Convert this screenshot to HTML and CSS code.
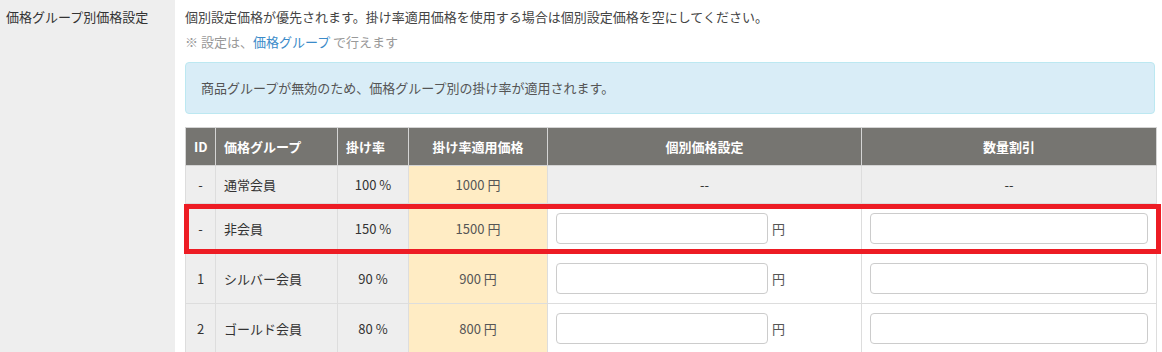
FILE: index.html
```html
<!DOCTYPE html>
<html lang="ja">
<head>
    <meta charset="UTF-8">
    <meta name="viewport" content="width=device-width, initial-scale=1.0">
    <title>価格グループ別価格設定</title>
    <link rel="stylesheet" href="styles.css">
</head>
<body>
    <div class="form-row">
        <div class="form-label">価格グループ別価格設定</div>
        <div class="form-body">
            <p class="note">個別設定価格が優先されます。掛け率適用価格を使用する場合は個別設定価格を空にしてください。</p>
            <p class="hint">※ 設定は、<a href="#">価格グループ</a> で行えます</p>
            <div class="alert-info">商品グループが無効のため、価格グループ別の掛け率が適用されます。</div>
            <div class="table-wrap">
                <table class="price-table">
                    <colgroup>
                        <col class="col-id">
                        <col class="col-group">
                        <col class="col-rate">
                        <col class="col-price">
                        <col class="col-custom">
                        <col class="col-qty">
                    </colgroup>
                    <thead>
                        <tr>
                            <th class="center">ID</th>
                            <th>価格グループ</th>
                            <th>掛け率</th>
                            <th class="center">掛け率適用価格</th>
                            <th class="center">個別価格設定</th>
                            <th class="center">数量割引</th>
                        </tr>
                    </thead>
                    <tbody>
                        <tr class="readonly">
                            <td class="center">-</td>
                            <td>通常会員</td>
                            <td class="center">100 %</td>
                            <td class="center price">1000 円</td>
                            <td class="center">--</td>
                            <td class="center">--</td>
                        </tr>
                        <tr>
                            <td class="center">-</td>
                            <td>非会員</td>
                            <td class="center">150 %</td>
                            <td class="center price">1500 円</td>
                            <td class="input-cell"><input type="text" class="yen-input"><span class="unit">円</span></td>
                            <td class="input-cell"><input type="text" class="qty-input"></td>
                        </tr>
                        <tr>
                            <td class="center">1</td>
                            <td>シルバー会員</td>
                            <td class="center">90 %</td>
                            <td class="center price">900 円</td>
                            <td class="input-cell"><input type="text" class="yen-input"><span class="unit">円</span></td>
                            <td class="input-cell"><input type="text" class="qty-input"></td>
                        </tr>
                        <tr>
                            <td class="center">2</td>
                            <td>ゴールド会員</td>
                            <td class="center">80 %</td>
                            <td class="center price">800 円</td>
                            <td class="input-cell"><input type="text" class="yen-input"><span class="unit">円</span></td>
                            <td class="input-cell"><input type="text" class="qty-input"></td>
                        </tr>
                    </tbody>
                </table>
                <div class="highlight"></div>
            </div>
        </div>
    </div>
</body>
</html>
```

FILE: styles.css
```css
body {
    font-family: "Noto Sans CJK JP", "Noto Sans", sans-serif;
    font-size: 13px;
    line-height: 19px;
    color: #333;
    margin: 0;
    padding: 0;
    background-color: #fff;
}
.form-row {
    display: flex;
    min-height: 352px;
}
.form-label {
    width: 169px;
    flex-shrink: 0;
    padding: 7px 0 0 6px;
    background-color: #eee;
}
.form-body {
    padding: 7px 0 0 10px;
    width: 970px;
}
.note {
    margin: 0 0 6px;
    color: #444;
}
.hint {
    margin: 0 0 11px;
    color: #999;
}
.hint a {
    color: #3b8bc9;
    text-decoration: none;
}
.alert-info {
    padding: 15px;
    line-height: 20px;
    margin-bottom: 13px;
    color: #555;
    background-color: #d9edf7;
    border: 1px solid #bce8f1;
    border-radius: 4px;
}
.table-wrap {
    position: relative;
}
.price-table {
    width: 971px;
    border-collapse: collapse;
    table-layout: fixed;
}
.col-id { width: 30px; }
.col-group { width: 122px; }
.col-rate { width: 71px; }
.col-price { width: 139px; }
.col-custom { width: 314px; }
.col-qty { width: 295px; }
.price-table th {
    background-color: #767571;
    color: #fff;
    font-weight: bold;
    text-align: left;
    padding: 9px 8px;
    border: 1px solid #d4d4d4;
}
.price-table td {
    padding: 9px 8px;
    border: 1px solid #ddd;
    background-color: #eee;
}
.price-table td.input-cell {
    background-color: #fff;
    padding: 9px 8px;
}
.price-table .center {
    text-align: center;
}
.price-table td.price {
    background-color: #ffecc4;
    color: #555;
}
.price-table .readonly td {
    background-color: #eee;
}
.price-table .readonly td.price {
    background-color: #ffecc4;
}
input[type="text"] {
    height: 31px;
    padding: 4px 8px;
    border: 1px solid #ccc;
    border-radius: 4px;
    box-sizing: border-box;
    font: inherit;
    vertical-align: middle;
}
.yen-input {
    width: 212px;
}
.unit {
    margin-left: 4px;
    vertical-align: middle;
    color: #555;
}
.qty-input {
    width: 100%;
}
.highlight {
    position: absolute;
    top: 77px;
    left: -1px;
    width: 977px;
    height: 50px;
    box-sizing: border-box;
    border: 5px solid #ed1c24;
    pointer-events: none;
}
```
